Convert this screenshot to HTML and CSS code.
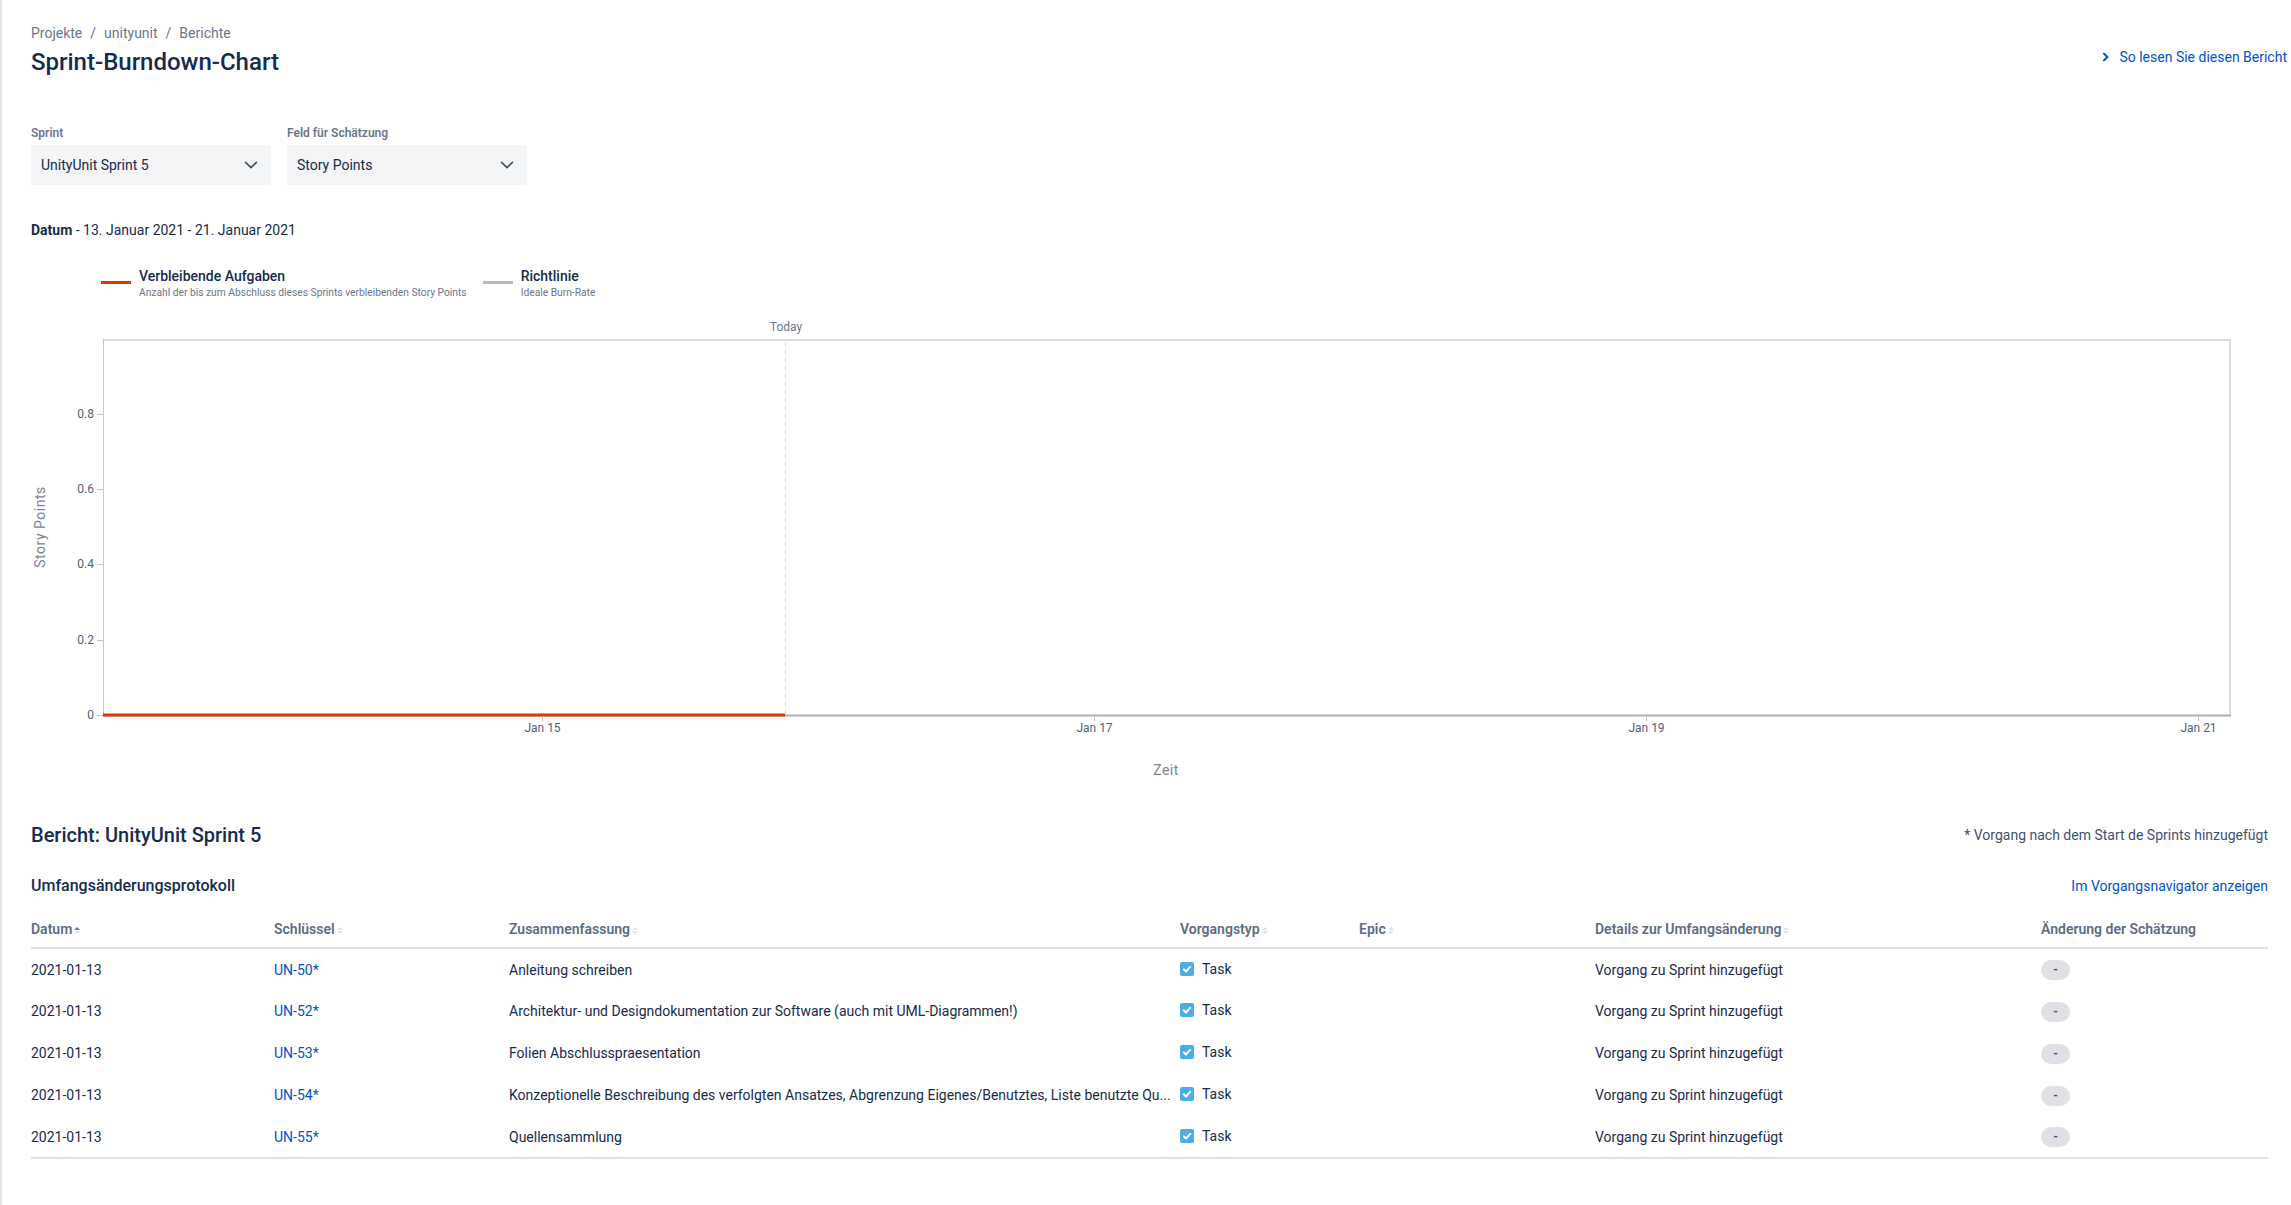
FILE: index.html
```html
<!DOCTYPE html>
<html lang="de">
<head>
<meta charset="utf-8">
<title>Sprint-Burndown-Chart</title>
<link rel="stylesheet" href="styles.css">
</head>
<body>
<div class="page">
  <header class="page-header">
    <div class="heading">
      <nav class="breadcrumbs"><a class="crumb">Projekte</a><span class="sep">/</span><a class="crumb">unityunit</a><span class="sep">/</span><a class="crumb">Berichte</a></nav>
      <h1 class="title">Sprint-Burndown-Chart</h1>
    </div>
    <a class="help-link"><svg class="help-icon" width="8" height="10" viewBox="0 0 8 10"><path d="M2 1.6L5.4 5 2 8.4" fill="none" stroke="currentColor" stroke-width="2" stroke-linecap="round" stroke-linejoin="round"/></svg><span>So lesen Sie diesen Bericht</span></a>
  </header>

  <div class="filters">
    <div class="field">
      <label class="field-label">Sprint</label>
      <div class="select"><span class="select-value">UnityUnit Sprint 5</span><svg class="select-icon" width="16" height="16" viewBox="0 0 16 16"><path d="M2.6 5.4L8 10.6l5.4-5.2" fill="none" stroke="currentColor" stroke-width="1.7" stroke-linecap="round" stroke-linejoin="round"/></svg></div>
    </div>
    <div class="field">
      <label class="field-label">Feld für Schätzung</label>
      <div class="select"><span class="select-value">Story Points</span><svg class="select-icon" width="16" height="16" viewBox="0 0 16 16"><path d="M2.6 5.4L8 10.6l5.4-5.2" fill="none" stroke="currentColor" stroke-width="1.7" stroke-linecap="round" stroke-linejoin="round"/></svg></div>
    </div>
  </div>

  <p class="date-range"><strong>Datum</strong> - 13. Januar 2021 - 21. Januar 2021</p>

  <div class="legend">
    <div class="legend-item">
      <span class="legend-swatch swatch-remaining"></span>
      <div class="legend-text">
        <div class="legend-name">Verbleibende Aufgaben</div>
        <div class="legend-desc">Anzahl der bis zum Abschluss dieses Sprints verbleibenden Story Points</div>
      </div>
    </div>
    <div class="legend-item">
      <span class="legend-swatch swatch-guide"></span>
      <div class="legend-text">
        <div class="legend-name">Richtlinie</div>
        <div class="legend-desc">Ideale Burn-Rate</div>
      </div>
    </div>
  </div>

  <svg class="chart" width="2256" height="488" viewBox="0 0 2256 488">
    <text class="axis-title" x="0" y="0" transform="translate(9 225) rotate(-90)" text-anchor="middle" dominant-baseline="central">Story Points</text>
    <line class="frame" x1="72" y1="38" x2="2200" y2="38"/>
    <line class="frame" x1="2199" y1="37" x2="2199" y2="414"/>
    <line class="y-axis" x1="72.5" y1="37" x2="72.5" y2="414"/>
    <line class="x-axis" x1="72" y1="413.5" x2="2200" y2="413.5"/>

    <line class="tick" x1="66" y1="112.5" x2="72" y2="112.5"/>
    <line class="tick" x1="66" y1="187.5" x2="72" y2="187.5"/>
    <line class="tick" x1="66" y1="262.5" x2="72" y2="262.5"/>
    <line class="tick" x1="66" y1="338.5" x2="72" y2="338.5"/>
    <line class="tick" x1="66" y1="413.5" x2="72" y2="413.5"/>
    <text class="tick-label" x="63" y="116" text-anchor="end">0.8</text>
    <text class="tick-label" x="63" y="191" text-anchor="end">0.6</text>
    <text class="tick-label" x="63" y="266" text-anchor="end">0.4</text>
    <text class="tick-label" x="63" y="342" text-anchor="end">0.2</text>
    <text class="tick-label" x="63" y="417" text-anchor="end">0</text>

    <line class="today-line" x1="754.5" y1="40" x2="754.5" y2="412"/>
    <text class="today-label" x="755" y="29" text-anchor="middle">Today</text>

    <line class="remaining" x1="72" y1="413" x2="754" y2="413"/>

    <line class="tick" x1="511.5" y1="414" x2="511.5" y2="419"/>
    <line class="tick" x1="1063.5" y1="414" x2="1063.5" y2="419"/>
    <line class="tick" x1="1615.5" y1="414" x2="1615.5" y2="419"/>
    <line class="tick" x1="2167.5" y1="414" x2="2167.5" y2="419"/>
    <text class="tick-label" x="511.5" y="430" text-anchor="middle">Jan 15</text>
    <text class="tick-label" x="1063.5" y="430" text-anchor="middle">Jan 17</text>
    <text class="tick-label" x="1615.5" y="430" text-anchor="middle">Jan 19</text>
    <text class="tick-label" x="2167.5" y="430" text-anchor="middle">Jan 21</text>

    <text class="axis-title" x="1135" y="473" text-anchor="middle">Zeit</text>
  </svg>

  <section class="report">
    <div class="report-head">
      <h2 class="report-title">Bericht: UnityUnit Sprint 5</h2>
      <span class="report-note">* Vorgang nach dem Start de Sprints hinzugefügt</span>
    </div>
    <div class="log-head">
      <h3 class="log-title">Umfangsänderungsprotokoll</h3>
      <a class="nav-link">Im Vorgangsnavigator anzeigen</a>
    </div>
    <table class="log-table">
      <colgroup>
        <col class="c-date"><col class="c-key"><col class="c-summary"><col class="c-type"><col class="c-epic"><col class="c-details"><col class="c-change">
      </colgroup>
      <thead>
        <tr>
          <th>Datum<span class="sort"><span class="up active"></span><span class="down"></span></span></th>
          <th>Schlüssel<span class="sort"><span class="up"></span><span class="down"></span></span></th>
          <th>Zusammenfassung<span class="sort"><span class="up"></span><span class="down"></span></span></th>
          <th>Vorgangstyp<span class="sort"><span class="up"></span><span class="down"></span></span></th>
          <th>Epic<span class="sort"><span class="up"></span><span class="down"></span></span></th>
          <th>Details zur Umfangsänderung<span class="sort"><span class="up"></span><span class="down"></span></span></th>
          <th>Änderung der Schätzung</th>
        </tr>
      </thead>
      <tbody>
        <tr>
          <td>2021-01-13</td>
          <td><a class="issue-key">UN-50*</a></td>
          <td>Anleitung schreiben</td>
          <td><span class="type"><svg class="task-icon" width="14" height="14" viewBox="0 0 14 14"><rect width="14" height="14" rx="2" fill="#4bade8"/><path d="M3.8 7.4l2.1 2.1 4.3-4.6" fill="none" stroke="#fff" stroke-width="2" stroke-linecap="round" stroke-linejoin="round"/></svg>Task</span></td>
          <td></td>
          <td>Vorgang zu Sprint hinzugefügt</td>
          <td><span class="lozenge">-</span></td>
        </tr>
        <tr>
          <td>2021-01-13</td>
          <td><a class="issue-key">UN-52*</a></td>
          <td>Architektur- und Designdokumentation zur Software (auch mit UML-Diagrammen!)</td>
          <td><span class="type"><svg class="task-icon" width="14" height="14" viewBox="0 0 14 14"><rect width="14" height="14" rx="2" fill="#4bade8"/><path d="M3.8 7.4l2.1 2.1 4.3-4.6" fill="none" stroke="#fff" stroke-width="2" stroke-linecap="round" stroke-linejoin="round"/></svg>Task</span></td>
          <td></td>
          <td>Vorgang zu Sprint hinzugefügt</td>
          <td><span class="lozenge">-</span></td>
        </tr>
        <tr>
          <td>2021-01-13</td>
          <td><a class="issue-key">UN-53*</a></td>
          <td>Folien Abschlusspraesentation</td>
          <td><span class="type"><svg class="task-icon" width="14" height="14" viewBox="0 0 14 14"><rect width="14" height="14" rx="2" fill="#4bade8"/><path d="M3.8 7.4l2.1 2.1 4.3-4.6" fill="none" stroke="#fff" stroke-width="2" stroke-linecap="round" stroke-linejoin="round"/></svg>Task</span></td>
          <td></td>
          <td>Vorgang zu Sprint hinzugefügt</td>
          <td><span class="lozenge">-</span></td>
        </tr>
        <tr>
          <td>2021-01-13</td>
          <td><a class="issue-key">UN-54*</a></td>
          <td>Konzeptionelle Beschreibung des verfolgten Ansatzes, Abgrenzung Eigenes/Benutztes, Liste benutzte Qu...</td>
          <td><span class="type"><svg class="task-icon" width="14" height="14" viewBox="0 0 14 14"><rect width="14" height="14" rx="2" fill="#4bade8"/><path d="M3.8 7.4l2.1 2.1 4.3-4.6" fill="none" stroke="#fff" stroke-width="2" stroke-linecap="round" stroke-linejoin="round"/></svg>Task</span></td>
          <td></td>
          <td>Vorgang zu Sprint hinzugefügt</td>
          <td><span class="lozenge">-</span></td>
        </tr>
        <tr>
          <td>2021-01-13</td>
          <td><a class="issue-key">UN-55*</a></td>
          <td>Quellensammlung</td>
          <td><span class="type"><svg class="task-icon" width="14" height="14" viewBox="0 0 14 14"><rect width="14" height="14" rx="2" fill="#4bade8"/><path d="M3.8 7.4l2.1 2.1 4.3-4.6" fill="none" stroke="#fff" stroke-width="2" stroke-linecap="round" stroke-linejoin="round"/></svg>Task</span></td>
          <td></td>
          <td>Vorgang zu Sprint hinzugefügt</td>
          <td><span class="lozenge">-</span></td>
        </tr>
      </tbody>
    </table>
  </section>
</div>
</body>
</html>
```

FILE: styles.css
```css
* { box-sizing: border-box; }

html, body {
  margin: 0;
  background: #ffffff;
}

body {
  font-family: "Segoe UI", Roboto, "Liberation Sans", sans-serif;
  font-size: 14px;
  line-height: 20px;
  color: #172b4d;
}

.page {
  border-left: 2px solid #e4e5e8;
  min-height: 1205px;
  padding: 23px 4px 0 29px;
}

/* Header */
.page-header {
  display: flex;
  justify-content: space-between;
  align-items: flex-start;
}

.breadcrumbs {
  display: flex;
  color: #6b778c;
  font-size: 14px;
  line-height: 20px;
}

.crumb { color: #6b778c; }

.sep { padding: 0 8px; }

.title {
  margin: 3px 0 0;
  font-size: 24px;
  font-weight: 500;
  line-height: 32px;
  color: #172b4d;
}

.help-link {
  margin-top: 24px;
  display: flex;
  align-items: center;
  gap: 9px;
  color: #0052cc;
  line-height: 20px;
}

.help-icon { display: block; }

/* Filters */
.filters {
  display: flex;
  gap: 16px;
  margin-top: 47px;
}

.field-label {
  display: block;
  font-size: 12px;
  font-weight: 600;
  line-height: 16px;
  color: #6b778c;
  margin-bottom: 4px;
}

.select {
  width: 240px;
  height: 40px;
  background: #f4f5f7;
  border-radius: 3px;
  display: flex;
  align-items: center;
  justify-content: space-between;
  padding: 0 12px 0 10px;
  color: #172b4d;
}

.select-icon { color: #42526e; display: block; }

.date-range {
  margin: 35px 0 0;
  line-height: 20px;
}

.date-range strong { font-weight: 700; }

/* Legend */
.legend {
  display: flex;
  gap: 16px;
  margin: 27px 0 0 70px;
}

.legend-item {
  display: flex;
  gap: 8px;
}

.legend-swatch {
  width: 30px;
  height: 3px;
  margin-top: 14px;
  flex: none;
}

.swatch-remaining { background: #de350b; }
.swatch-guide { background: #b3bac5; }

.legend-name {
  font-size: 14px;
  font-weight: 500;
  line-height: 18px;
  color: #172b4d;
}

.legend-desc {
  font-size: 10.25px;
  line-height: 16px;
  color: #6b778c;
}

/* Chart */
.chart {
  display: block;
  margin-top: 1px;
}

.axis-title {
  font-size: 14px;
  fill: #7a869a;
  letter-spacing: 0.5px;
}

.frame { stroke: #dddddd; stroke-width: 2; }
.y-axis { stroke: #c4c4c4; stroke-width: 1; }
.x-axis { stroke: #b0b0b0; stroke-width: 2; }
.tick { stroke: #c4c4c4; stroke-width: 1; }

.tick-label {
  font-size: 12px;
  fill: #505f79;
}

.today-line {
  stroke: #dcdcdc;
  stroke-width: 1;
  stroke-dasharray: 4 4;
}

.today-label {
  font-size: 12px;
  fill: #6b778c;
}

.remaining {
  stroke: #de350b;
  stroke-width: 3;
}

/* Report */
.report {
  margin: 33px 19px 0 0;
}

.report-head,
.log-head {
  display: flex;
  justify-content: space-between;
  align-items: center;
}

.report-title {
  margin: 0;
  font-size: 20px;
  font-weight: 500;
  line-height: 24px;
  color: #172b4d;
}

.report-note {
  font-size: 14px;
  color: #42526e;
}

.log-head { margin-top: 29px; }

.log-title {
  margin: 0;
  font-size: 16px;
  font-weight: 500;
  line-height: 20px;
}

.nav-link { color: #0052cc; }

.log-table {
  width: 100%;
  margin-top: 15px;
  border-collapse: collapse;
  table-layout: fixed;
}

.c-date { width: 243px; }
.c-key { width: 235px; }
.c-summary { width: 671px; }
.c-type { width: 179px; }
.c-epic { width: 236px; }
.c-details { width: 446px; }
.c-change { width: 227px; }

.log-table th {
  text-align: left;
  font-size: 14px;
  font-weight: 600;
  line-height: 20px;
  color: #5e6c84;
  padding: 8px 0;
  border-bottom: 2px solid #dfe1e6;
  white-space: nowrap;
}

.sort {
  display: inline-flex;
  flex-direction: column;
  gap: 1px;
  margin-left: 2px;
  vertical-align: middle;
}

.sort .up,
.sort .down {
  width: 0;
  height: 0;
  border-left: 3px solid transparent;
  border-right: 3px solid transparent;
}

.sort .up { border-bottom: 3px solid #dfe1e6; }
.sort .down { border-top: 3px solid #dfe1e6; }
.sort .up.active { border-bottom-color: #6b778c; }

.log-table td {
  height: 42px;
  padding: 0 2px 0 0;
  vertical-align: middle;
  white-space: nowrap;
  overflow: hidden;
  text-overflow: ellipsis;
  color: #172b4d;
}

.log-table tbody tr:last-child td {
  border-bottom: 2px solid #dfe1e6;
}

.issue-key { color: #0052cc; }

.type {
  display: inline-flex;
  align-items: center;
  gap: 8px;
}

.task-icon { display: block; flex: none; }

.lozenge {
  display: inline-block;
  min-width: 29px;
  height: 20px;
  border-radius: 10px;
  background: #dfe1e6;
  color: #42526e;
  text-align: center;
  font-size: 12px;
  font-weight: 700;
  line-height: 20px;
}
```
